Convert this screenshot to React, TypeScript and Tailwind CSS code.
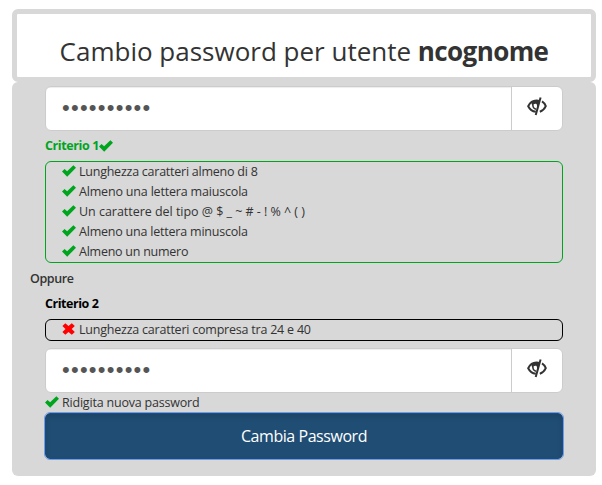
interface CriterionProps {
  text: string;
  ok?: boolean;
  spacing?: string;
}

function OkIcon() {
  return (
    <svg className="h-[12px] w-[14px] shrink-0 text-[#00a51e]" viewBox="0 0 14 12" fill="currentColor">
      <path d="M0 6.5 2.6 3.9 5.1 6.3 11.4 0.2 14 2.8 5.2 11.7Z" />
    </svg>
  );
}

function RemoveIcon() {
  return (
    <svg className="h-[12px] w-[14px] shrink-0 text-[#ff0000]" viewBox="0 0 14 12" fill="currentColor">
      <path d="M3.3 0.2 6.5 3.1 9.8 0.2 12.8 3 9.7 6 12.8 9 9.8 11.8 6.5 8.9 3.3 11.8 0.4 9 3.5 6 0.4 3Z" />
    </svg>
  );
}

function EyeClosedIcon() {
  return (
    <svg className="h-[19px] w-[20px]" viewBox="0 0 20 19" fill="none" stroke="#333333">
      <path d="M11.5 3.8C7 3 3.2 5.2 1.2 9.2 2.8 12.4 5 14.2 8.8 14.8" strokeWidth="2" />
      <path d="M4 5C6.5 3.2 9.5 2.8 12.9 3.2L10.6 11 9.6 7C7.8 6.2 6.6 7 5.4 9Z" fill="#333333" stroke="none" />
      <path d="M6 7.4C5.6 9.8 6.7 11.8 9.2 12.2" strokeWidth="1.5" />
      <path d="M13.6 0.5 8.7 18" strokeWidth="2" />
      <path d="M15 4.4C16.7 5.5 18 7 18.8 9.1 17.5 12 15.5 13.8 12.8 14.7" strokeWidth="2" />
    </svg>
  );
}

function PasswordField() {
  return (
    <div className="flex h-[45px] overflow-hidden rounded-[6px] border border-[#cccccc] bg-white">
      <div className="flex flex-1 items-center pb-[2px] pl-[16px] font-['Liberation_Sans',sans-serif] text-[22px] leading-none tracking-[1.25px] text-[#555555] shadow-[inset_0_1px_1px_rgba(0,0,0,0.075)]">
        ••••••••••
      </div>
      <button type="button" className="flex w-[51px] justify-center border-l border-[#cccccc] pt-[10px]">
        <EyeClosedIcon />
      </button>
    </div>
  );
}

function Criterion({ text, ok = true, spacing = "tracking-normal" }: CriterionProps) {
  return (
    <li className="flex h-[20px] items-center gap-[3px] pb-[2px]">
      {ok ? <OkIcon /> : <RemoveIcon />}
      <span className={`whitespace-pre pt-px ${spacing}`}>{text}</span>
    </li>
  );
}

export default function App() {
  return (
    <div className="h-[485px] w-[602px] bg-white pt-[9px] pl-[12px] font-['Open_Sans','Noto_Sans',sans-serif] text-[12.5px] leading-[20px] text-[#333333]">
      <header className="flex h-[73px] w-[584px] justify-center rounded-[6px] border-[5px] border-[#d8d8d8] bg-white pt-[19px]">
        <h1 className="text-[26px] leading-[36px] whitespace-nowrap">
          Cambio password per utente <b className="tracking-[-0.6px]">ncognome</b>
        </h1>
      </header>

      <main className="h-[394px] w-[584px] rounded-[6px] bg-[#d8d8d8] pt-[4px] pr-[33px] pl-[33px]">
        <PasswordField />

        <div className="flex h-[30px] items-center font-bold text-[#00a51e]">
          <span className="tracking-[-0.4px]">Criterio 1</span>
          <OkIcon />
        </div>
        <ul className="h-[102px] rounded-[6px] border border-[#00a51e] pl-[16px]">
          <Criterion text="Lunghezza caratteri almeno di 8" spacing="tracking-[-0.24px]" />
          <Criterion text="Almeno una lettera maiuscola" spacing="tracking-[-0.18px]" />
          <Criterion text="Un carattere del tipo @ $ _ ~ # - ! % ^ ( )" spacing="tracking-[-0.03px]" />
          <Criterion text="Almeno una lettera minuscola" spacing="tracking-[-0.21px]" />
          <Criterion text="Almeno un numero" spacing="tracking-[-0.25px]" />
        </ul>

        <p className="-ml-[15px] h-[25px] pt-[6px] font-semibold tracking-[-0.4px]">Oppure</p>
        <p className="h-[31px] pt-[6px] font-bold tracking-[-0.45px] text-black">Criterio 2</p>
        <ul className="mb-[7px] h-[22px] rounded-[6px] border border-black pl-[16px]">
          <Criterion ok={false} text="Lunghezza caratteri compresa tra 24 e 40" spacing="tracking-[-0.22px]" />
        </ul>

        <PasswordField />

        <ul>
          <Criterion text="Ridigita nuova password" spacing="tracking-[-0.2px]" />
        </ul>
        <button
          type="button"
          className="block h-[46px] w-full rounded-[5px] border border-[#204d74] bg-[#204d74] text-[16px] font-medium tracking-[-0.45px] text-white shadow-[inset_0_3px_5px_rgba(0,0,0,0.125)] outline-1 outline-[#6f9cea]"
        >
          Cambia Password
        </button>
      </main>
    </div>
  );
}
